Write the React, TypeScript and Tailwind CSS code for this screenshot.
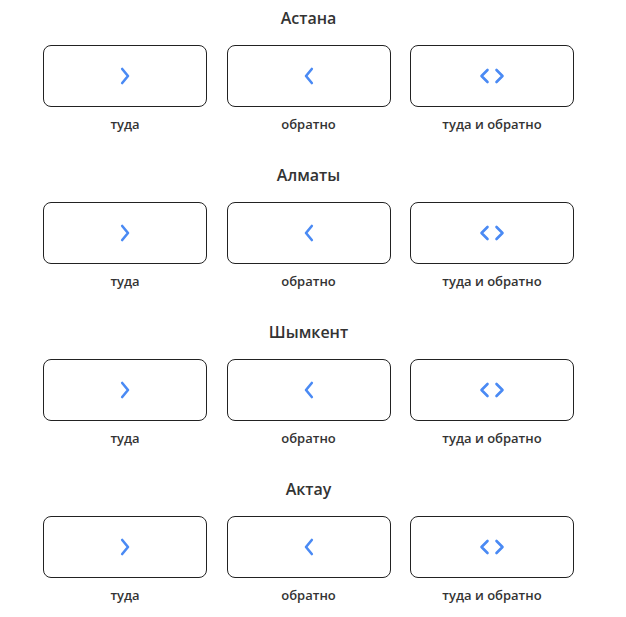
import React from "react";

const cities = ["Астана", "Алматы", "Шымкент", "Актау"];

function Right() {
  return (
    <svg width="10" height="18" viewBox="0 0 10 18" fill="none">
      <path d="M2.2 2 L8 9 L2.2 16" stroke="#4a8af4" strokeWidth="2.6" strokeLinecap="round" strokeLinejoin="round" />
    </svg>
  );
}
function Left() {
  return (
    <svg width="10" height="18" viewBox="0 0 10 18" fill="none">
      <path d="M7.8 2 L2 9 L7.8 16" stroke="#4a8af4" strokeWidth="2.6" strokeLinecap="round" strokeLinejoin="round" />
    </svg>
  );
}
function Both() {
  return (
    <svg width="28" height="18" viewBox="0 0 28 18" fill="none">
      <path d="M9.5 3 L3.5 9 L9.5 15" stroke="#4a8af4" strokeWidth="2.6" strokeLinecap="round" strokeLinejoin="round" />
      <path d="M18.5 3 L24.5 9 L18.5 15" stroke="#4a8af4" strokeWidth="2.6" strokeLinecap="round" strokeLinejoin="round" />
    </svg>
  );
}

const opts = [
  { label: "туда", icon: <Right /> },
  { label: "обратно", icon: <Left /> },
  { label: "туда и обратно", icon: <Both /> },
];

export default function App() {
  return (
    <div
      className="w-[626px] min-h-[617px] bg-white pl-[43px] pt-[6px] text-[#333]"
      style={{ fontFamily: '"Open Sans", "Noto Sans", sans-serif' }}
    >
      <div className="w-[531px] flex flex-col gap-[30px]">
        {cities.map((c) => (
          <div key={c} className="flex flex-col">
            <div className="text-center text-[16px] leading-[24px] font-semibold mb-[15px]">{c}</div>
            <div className="grid grid-cols-3 gap-x-[19.5px]">
              {opts.map((o) => (
                <div key={o.label} className="flex flex-col items-center">
                  <div className="w-full h-[62px] border border-[#222] rounded-[8px] flex items-center justify-center">
                    {o.icon}
                  </div>
                  <div className="mt-[8px] text-[13px] leading-[18px] font-semibold">{o.label}</div>
                </div>
              ))}
            </div>
          </div>
        ))}
      </div>
    </div>
  );
}
